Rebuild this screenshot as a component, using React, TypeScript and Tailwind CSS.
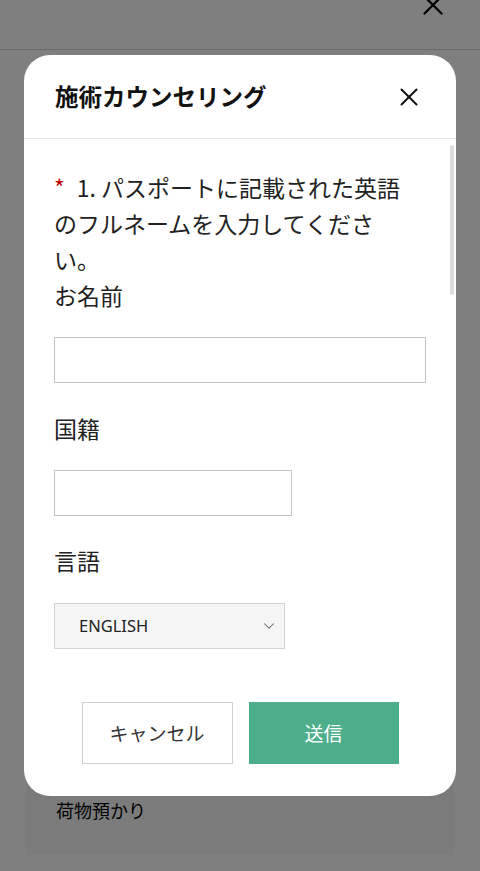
import { X, ChevronDown } from "lucide-react";

const jp = { fontFamily: '"Noto Sans CJK JP", "Noto Sans", sans-serif' };

function Field({
  label,
  widthClass,
}: {
  label: string;
  widthClass: string;
}) {
  return (
    <div className="flex flex-col">
      <label className="text-[23px] leading-[36px] text-[#222]">{label}</label>
      <input
        type="text"
        className={`mt-[24px] h-[46px] border border-[#c4c4c4] bg-white ${widthClass}`}
      />
    </div>
  );
}

export default function App() {
  return (
    <div
      className="relative h-[871px] w-[480px] overflow-hidden bg-white"
      style={jp}
    >
      {/* page behind the dialog */}
      <header className="relative h-[50px] border-b border-[#d6d6d6]">
        <X
          className="absolute right-[30px] top-[-12px] h-[34px] w-[34px] text-black"
          strokeWidth={1.6}
        />
      </header>
      <div className="flex h-[805px] flex-col justify-end px-[26px]">
        <div className="h-[100px] bg-[#f7f7f7] px-[30px] pt-[42px] text-[18px] leading-[27px] text-black">
          荷物預かり
        </div>
      </div>

      {/* overlay */}
      <div className="absolute inset-0 bg-black/50" />

      {/* dialog */}
      <div
        role="dialog"
        className="absolute left-[24px] top-[55px] flex h-[741px] w-[432px] flex-col overflow-hidden rounded-[26px] bg-white"
      >
        <div className="flex h-[84px] shrink-0 items-center justify-between border-b border-[#e6e6e6] pl-[31px] pr-[32px]">
          <h3 className="text-[23.5px] font-bold text-[#111]">
            施術カウンセリング
          </h3>
          <X className="h-[30px] w-[30px] text-[#111]" strokeWidth={1.6} />
        </div>

        <div className="relative flex-1">
          <div className="absolute right-[2px] top-[6px] h-[150px] w-[4px] rounded-full bg-[#dcdcdc]" />
          <div className="flex flex-col pl-[30px] pr-[30px] pt-[30px]">
            <p className="whitespace-nowrap text-[23px] leading-[36px] text-[#222]">
              <span className="mr-[12px] text-[#c00000]">*</span>
              1. パスポートに記載された英語
              <br />
              のフルネームを入力してくださ
              <br />
              い。
            </p>
            <Field label="お名前" widthClass="w-[372px]" />
            <div className="mt-[27px]">
              <Field label="国籍" widthClass="w-[238px]" />
            </div>
            <div className="mt-[26px] flex flex-col">
              <label className="text-[23px] leading-[36px] text-[#222]">
                言語
              </label>
              <div className="mt-[25px] flex h-[46px] w-[231px] items-center justify-between border border-[#d2d2d2] bg-[#f5f5f5] pl-[24px] pr-[6px]">
                <span
                  className="text-[16.5px] text-[#222]"
                  style={{ fontFamily: '"Noto Sans", sans-serif' }}
                >
                  ENGLISH
                </span>
                <ChevronDown
                  className="h-[18px] w-[18px] text-[#666]"
                  strokeWidth={1.4}
                />
              </div>
            </div>
          </div>
          <div className="mt-[53px] flex justify-center gap-[16px]">
            <button
              type="button"
              className="h-[62px] w-[151px] border border-[#cfcfcf] bg-white text-[19px] text-[#333]"
            >
              キャンセル
            </button>
            <button
              type="button"
              className="h-[62px] w-[150px] bg-[#4dae8b] text-[19px] text-white"
            >
              送信
            </button>
          </div>
        </div>
      </div>
    </div>
  );
}
